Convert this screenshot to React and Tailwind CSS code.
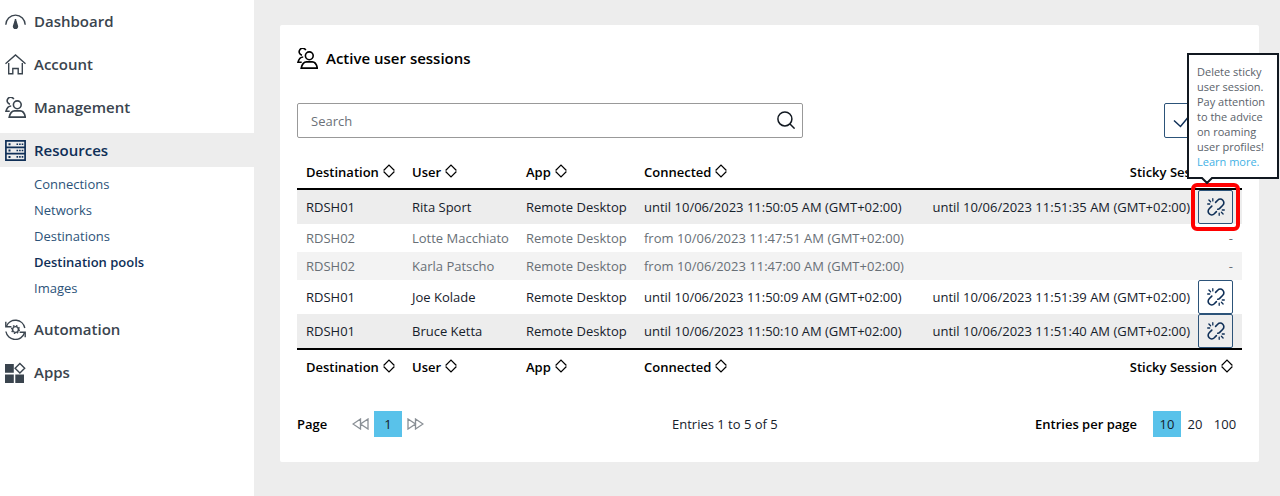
import { useState } from 'react';

const sessions = [
  { id: 1, destination: 'RDSH01', user: 'Rita Sport', connected: 'until 10/06/2023 11:50:05 AM (GMT+02:00)', sticky: 'until 10/06/2023 11:51:35 AM (GMT+02:00)' },
  { id: 2, destination: 'RDSH02', user: 'Lotte Macchiato', connected: 'from 10/06/2023 11:47:51 AM (GMT+02:00)' },
  { id: 3, destination: 'RDSH02', user: 'Karla Patscho', connected: 'from 10/06/2023 11:47:00 AM (GMT+02:00)' },
  { id: 4, destination: 'RDSH01', user: 'Joe Kolade', connected: 'until 10/06/2023 11:50:09 AM (GMT+02:00)', sticky: 'until 10/06/2023 11:51:39 AM (GMT+02:00)' },
  { id: 5, destination: 'RDSH01', user: 'Bruce Ketta', connected: 'until 10/06/2023 11:50:10 AM (GMT+02:00)', sticky: 'until 10/06/2023 11:51:40 AM (GMT+02:00)' },
];

const resourceLinks = ['Connections', 'Networks', 'Destinations', 'Destination pools', 'Images'];

function Icon({ children, strokeWidth = 1.4 }) {
  return (
    <svg viewBox="0 0 21 21" fill="none" stroke="currentColor" strokeWidth={strokeWidth} className="size-[21px] shrink-0" aria-hidden="true">
      {children}
    </svg>
  );
}

function DashboardIcon() {
  return (
    <Icon>
      <path d="M.8 13.8a9.7 9.7 0 1 1 19.4 0" />
      <path d="M10.5 8v6" strokeWidth="1.5" />
      <path d="M9.6 9.5 8 14.4a2.7 2.7 0 1 0 5 0l-1.6-4.9Z" fill="currentColor" stroke="none" />
    </Icon>
  );
}

function HomeIcon() {
  return (
    <Icon>
      <path d="M.5 9.8 10.5 1l10 8.8" />
      <path d="M3.7 9v10.8h4.1v-5.3h5.4v5.3h4.1V9" />
    </Icon>
  );
}

function UsersIcon() {
  return (
    <Icon strokeWidth={1.6}>
      <path d="M8.8 2.2A3.5 3.5 0 1 0 5 7.2M6.2 9C3 9.2 1.8 10.8 1 14.2h3.7" />
      <circle cx="12.3" cy="7.8" r="3.9" />
      <path d="M4.2 20.1c.9-4 2.2-6.2 5.3-6.2h5.8c3 0 4.2 2.2 5 6.2Z" />
    </Icon>
  );
}

function ServerIcon() {
  return (
    <Icon>
      <path d="M.9.9h19.2v19.2H.9ZM.9 7.3h19.2M.9 13.7h19.2" strokeWidth="1.7" />
      <path d="M3.5 4.2h2M3.5 10.5h2M3.5 16.9h2" strokeWidth="2" />
      <path d="M11.5 4.2h7M11.5 10.5h7M11.5 16.9h7" strokeWidth="1.6" strokeDasharray="1.6 1" />
    </Icon>
  );
}

function AutomationIcon() {
  return (
    <Icon>
      <path d="M1.5 7.2A9.6 9.6 0 0 1 19.8 9M19.5 13.8A9.6 9.6 0 0 1 .9 12.5" />
      <path d="M.8 2.8v5h5.6M20.2 18.2v-5h-5.6" />
      <circle cx="10.5" cy="10.5" r="2.9" />
      <circle cx="10.5" cy="10.5" r="3.9" strokeWidth="1.3" strokeDasharray="1.53 1.53" />
    </Icon>
  );
}

function AppsIcon() {
  return (
    <Icon>
      <path d="M0 2h8.8v8.8H0ZM0 12.5h8.8v8.5H0ZM10.3 12.5h8.7v8.5h-8.7Z" fill="currentColor" stroke="none" />
      <path d="m14.9 1.5 4.8 4.8-4.8 4.8-4.8-4.8Z" />
    </Icon>
  );
}

function UnlinkIcon() {
  return (
    <svg viewBox="0 0 18 18" fill="none" stroke="currentColor" strokeWidth="1.6" strokeLinecap="round" className="size-[18px]" aria-hidden="true">
      <path d="m8.6 4.4 2.1-2.2a3.6 3.6 0 0 1 5.1 5.1l-3.3 3.3c-.5.4-1 .6-1.7.7" />
      <path d="m9.4 13.6-2.1 2.2a3.6 3.6 0 0 1-5.1-5.1l2.6-2.6" />
      <path d="M5.8.7v2.2M1.9 2l1.7 1.8M.7 6h2M12.2 15.1v2.2M14.4 14.2l1.7 1.8M15.3 12h2" strokeWidth="1.3" />
    </svg>
  );
}

function SortIcon() {
  return (
    <svg viewBox="0 0 12 14" fill="none" stroke="currentColor" strokeWidth="1.2" className="mb-[2px] h-[14px] w-[12px]" aria-hidden="true">
      <path d="M.6 6.5 6 1l5.4 5.5M.6 7.5 6 13l5.4-5.5" />
    </svg>
  );
}

function NavItem({ icon, label, active, children }) {
  return (
    <li>
      <a
        href="#"
        className={`flex h-[34px] items-center gap-2 pl-[5px] text-[15px] leading-5 font-semibold ${active ? 'bg-[#ededed] text-[#0f2f57]' : 'text-[#3a444e]'}`}
      >
        {icon}
        {label}
      </a>
      {children}
    </li>
  );
}

function HeaderRow({ border }) {
  return (
    <tr>
      {['Destination', 'User', 'App', 'Connected', 'Sticky Session'].map((label) => (
        <th key={label} scope="col" className={`h-[35px] border-black px-[9px] font-semibold ${border} ${label === 'Sticky Session' ? 'text-right' : 'text-left'}`}>
          <button type="button" className="inline-flex items-center gap-1 align-middle">
            {label}
            <SortIcon />
          </button>
        </th>
      ))}
    </tr>
  );
}

function StickyTooltip() {
  return (
    <div role="tooltip" className="absolute bottom-[45px] left-[-11px] z-10 w-[92px] border-2 border-[#111820] bg-white pt-[9px] pb-2 pl-2 text-left text-[11px] leading-[15px] whitespace-nowrap text-[#5a626a]">
      Delete sticky<br />
      user session.<br />
      Pay attention<br />
      to the advice<br />
      on roaming<br />
      user profiles!<br />
      <a href="#" className="text-[#3fb1e5]">Learn more.</a>
      <svg viewBox="0 0 12 7" className="absolute top-full left-3 h-[7px] w-3" aria-hidden="true">
        <path d="M0 0h12L6 6Z" fill="white" />
        <path d="M0 1h1l5 5 5-5h1" fill="none" stroke="#111820" strokeWidth="2" />
      </svg>
    </div>
  );
}

function SessionRow({ session, highlighted }) {
  const { destination, user, connected, sticky } = session;
  return (
    <tr className={sticky ? 'h-[34px] text-[#16212b] odd:bg-[#ededed]' : 'h-[28px] text-[#686f76] odd:bg-[#f3f3f3]'}>
      <td className="px-[9px]">{destination}</td>
      <td className="px-[9px]">{user}</td>
      <td className="px-[9px]">Remote Desktop</td>
      <td className="px-[9px]">{connected}</td>
      <td className="px-[9px]">
        <div className="flex items-center justify-end gap-2">
          {sticky || '-'}
          {sticky && (
            <div className="relative">
              <button type="button" aria-label="Delete sticky session" className="flex h-[34px] w-[35px] items-center justify-center rounded-[2px] border border-[#2c5379] text-[#0f2f57]">
                <UnlinkIcon />
              </button>
              {highlighted && (
                <>
                  <span className="pointer-events-none absolute -inset-[7px] rounded-md border-4 border-[#ff0000]" />
                  <StickyTooltip />
                </>
              )}
            </div>
          )}
        </div>
      </td>
    </tr>
  );
}

export default function App() {
  const [search, setSearch] = useState('');
  const [pageSize, setPageSize] = useState(10);

  return (
    <div className="flex min-h-screen bg-[#ededed] font-['Open_Sans',sans-serif] text-[13px] leading-5 text-[#16212b]">
      <nav className="w-[254px] shrink-0 bg-white pt-1">
        <ul className="flex flex-col gap-[9px]">
          <NavItem icon={<DashboardIcon />} label="Dashboard" />
          <NavItem icon={<HomeIcon />} label="Account" />
          <NavItem icon={<UsersIcon />} label="Management" />
          <NavItem icon={<ServerIcon />} label="Resources" active>
            <ul className="pt-1 pb-[2px] pl-[34px]">
              {resourceLinks.map((label) => (
                <li key={label}>
                  <a href="#" className={`block leading-[26px] ${label === 'Destination pools' ? 'font-semibold text-[#0f2f57]' : 'text-[#2c5379]'}`}>{label}</a>
                </li>
              ))}
            </ul>
          </NavItem>
          <NavItem icon={<AutomationIcon />} label="Automation" />
          <NavItem icon={<AppsIcon />} label="Apps" />
        </ul>
      </nav>

      <main className="min-w-0 flex-1 pt-[25px] pr-[21px] pb-8 pl-[26px]">
        <section className="rounded-[2px] bg-white px-[17px] pt-[22px] pb-[25px]">
          <h1 className="flex items-center gap-2 text-[15px] leading-[22px] font-semibold text-black">
            <UsersIcon />
            Active user sessions
          </h1>

          <div className="mt-[34px] flex items-center justify-between">
            <div className="relative w-[506px]">
              <input
                value={search}
                onChange={(e) => setSearch(e.target.value)}
                aria-label="Search"
                placeholder="Search"
                className="h-[35px] w-full rounded-[2px] border border-[#999] px-[13px] outline-none placeholder:text-[#6b7178]"
              />
              <svg viewBox="0 0 18 18" fill="none" stroke="#111820" strokeWidth="1.5" className="absolute top-2 right-2 size-[18px]" aria-hidden="true">
                <circle cx="7.9" cy="7.9" r="7" />
                <path d="m13 13 4.6 4.6" />
              </svg>
            </div>
            <button type="button" aria-label="Select all" className="mr-[43px] flex size-[35px] items-center justify-center rounded-[2px] border border-[#2c5379] text-[#0f2f57]">
              <svg viewBox="0 0 18 14" fill="none" stroke="currentColor" strokeWidth="1.5" className="h-[14px] w-[18px]" aria-hidden="true">
                <path d="m1 6.5 6.5 6L17 1" />
              </svg>
            </button>
          </div>

          <table className="mt-[17px] w-full table-fixed border-separate border-spacing-0 whitespace-nowrap">
            <colgroup>
              <col className="w-[106px]" />
              <col className="w-[114px]" />
              <col className="w-[118px]" />
              <col className="w-[282px]" />
              <col />
            </colgroup>
            <thead className="text-black">
              <HeaderRow border="border-b-2" />
            </thead>
            <tbody>
              {sessions.map((session, i) => (
                <SessionRow key={session.id} session={session} highlighted={i === 0} />
              ))}
            </tbody>
            <tfoot className="text-black">
              <HeaderRow border="border-t-2" />
            </tfoot>
          </table>

          <div className="mt-7 flex items-center">
            <div className="flex w-[375px] items-center">
              <span className="w-[55px] font-semibold text-black">Page</span>
              <button type="button" aria-label="Previous page" className="text-[#8a9096]">
                <svg viewBox="0 0 17 12" fill="none" stroke="currentColor" strokeWidth="1.3" className="h-3 w-[17px]" aria-hidden="true">
                  <path d="M8.5 1v10L1 6ZM16 1v10L8.5 6Z" />
                </svg>
              </button>
              <button type="button" className="mx-[5px] h-[26px] w-7 bg-[#59c2ea]">1</button>
              <button type="button" aria-label="Next page" className="text-[#8a9096]">
                <svg viewBox="0 0 17 12" fill="none" stroke="currentColor" strokeWidth="1.3" className="h-3 w-[17px]" aria-hidden="true">
                  <path d="M8.5 1v10L16 6ZM1 1v10L8.5 6Z" />
                </svg>
              </button>
            </div>
            <span>Entries 1 to 5 of 5</span>
            <span className="mr-4 ml-auto font-semibold text-black">Entries per page</span>
            <div className="flex pr-px">
              {[10, 20, 100].map((size) => (
                <button
                  key={size}
                  type="button"
                  onClick={() => setPageSize(size)}
                  className={`h-[26px] ${size === 100 ? 'w-8' : 'w-7'} ${size === pageSize ? 'bg-[#59c2ea]' : ''}`}
                >
                  {size}
                </button>
              ))}
            </div>
          </div>
        </section>
      </main>
    </div>
  );
}
